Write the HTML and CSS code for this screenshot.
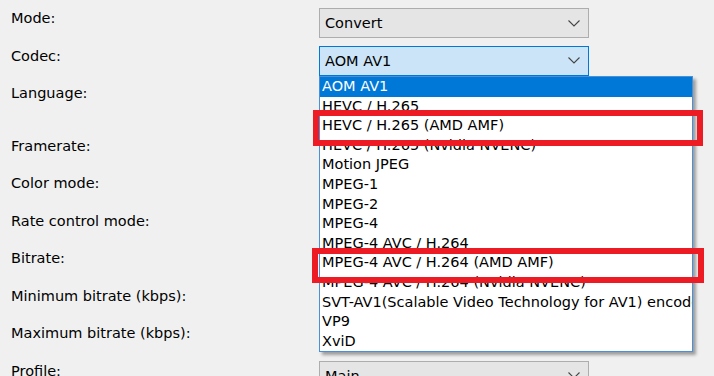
FILE: index.html
```html
<!DOCTYPE html>
<html>
<head>
<meta charset="utf-8">
<link rel="stylesheet" href="styles.css">
</head>
<body>
<div class="form">
  <div class="row">
    <div class="label">Mode:</div>
    <div class="combo"><span class="value">Convert</span><svg class="chev" width="12" height="7" viewBox="0 0 12 7"><polyline points="0.5,0.5 6,6 11.5,0.5" fill="none" stroke="#444" stroke-width="1.1"/></svg></div>
  </div>
  <div class="row">
    <div class="label">Codec:</div>
    <div class="combo focused"><span class="value">AOM AV1</span><svg class="chev" width="12" height="7" viewBox="0 0 12 7"><polyline points="0.5,0.5 6,6 11.5,0.5" fill="none" stroke="#444" stroke-width="1.1"/></svg></div>
  </div>
  <div class="row tall">
    <div class="label">Language:</div>
  </div>
  <div class="row"><div class="label">Framerate:</div></div>
  <div class="row"><div class="label">Color mode:</div></div>
  <div class="row"><div class="label">Rate control mode:</div></div>
  <div class="row"><div class="label">Bitrate:</div></div>
  <div class="row"><div class="label">Minimum bitrate (kbps):</div></div>
  <div class="row"><div class="label">Maximum bitrate (kbps):</div></div>
  <div class="row">
    <div class="label">Profile:</div>
    <div class="combo"><span class="value">Main</span><svg class="chev" width="12" height="7" viewBox="0 0 12 7"><polyline points="0.5,0.5 6,6 11.5,0.5" fill="none" stroke="#444" stroke-width="1.1"/></svg></div>
  </div>
</div>

<ul class="dropdown">
  <li class="selected">AOM AV1</li>
  <li>HEVC / H.265</li>
  <li>HEVC / H.265 (AMD AMF)</li>
  <li>HEVC / H.265 (Nvidia NVENC)</li>
  <li>Motion JPEG</li>
  <li>MPEG-1</li>
  <li>MPEG-2</li>
  <li>MPEG-4</li>
  <li>MPEG-4 AVC / H.264</li>
  <li>MPEG-4 AVC / H.264 (AMD AMF)</li>
  <li>MPEG-4 AVC / H.264 (Nvidia NVENC)</li>
  <li>SVT-AV1(Scalable Video Technology for AV1) encoder</li>
  <li>VP9</li>
  <li>XviD</li>
</ul>

<div class="highlight h1"></div>
<div class="highlight h2"></div>
</body>
</html>
```

FILE: styles.css
```css
html, body {
  margin: 0;
  padding: 0;
  background: #f0f0f0;
  width: 714px;
  height: 376px;
  overflow: hidden;
  font-family: "DejaVu Sans", sans-serif;
  font-size: 14.5px;
  color: #000;
}

.form {
  padding: 8px 0 0 11px;
  display: flex;
  flex-direction: column;
}

.row {
  height: 37.5px;
  display: flex;
  align-items: flex-start;
  flex-shrink: 0;
}

.row.tall {
  height: 52.5px;
}

.label {
  width: 308px;
  line-height: 20px;
  flex-shrink: 0;
}

.combo {
  box-sizing: border-box;
  width: 270px;
  height: 30px;
  background: #e5e5e5;
  border: 1px solid #adadad;
  display: flex;
  align-items: center;
  justify-content: space-between;
  padding: 0 8px 0 5px;
}

.combo.focused {
  background: #cce4f7;
  border-color: #0078d7;
}

.chev {
  display: block;
}

.dropdown {
  position: absolute;
  left: 319px;
  top: 76px;
  width: 374px;
  height: 276px;
  box-sizing: border-box;
  margin: 0;
  padding: 0;
  list-style: none;
  background: #fff;
  border: 1px solid #4a90d9;
  box-shadow: 3px 3px 3px rgba(0, 0, 0, 0.35);
  overflow: hidden;
}

.dropdown li {
  height: 19.6px;
  line-height: 19.6px;
  padding-left: 2px;
  white-space: nowrap;
  overflow: hidden;
}

.dropdown li.selected {
  background: #0078d7;
  color: #fff;
}

.highlight {
  position: absolute;
  border: 6px solid #ed1c24;
  box-sizing: border-box;
}

.h1 {
  left: 313px;
  top: 110px;
  width: 390px;
  height: 36px;
}

.h2 {
  left: 312px;
  top: 248px;
  width: 392px;
  height: 35px;
}
```
